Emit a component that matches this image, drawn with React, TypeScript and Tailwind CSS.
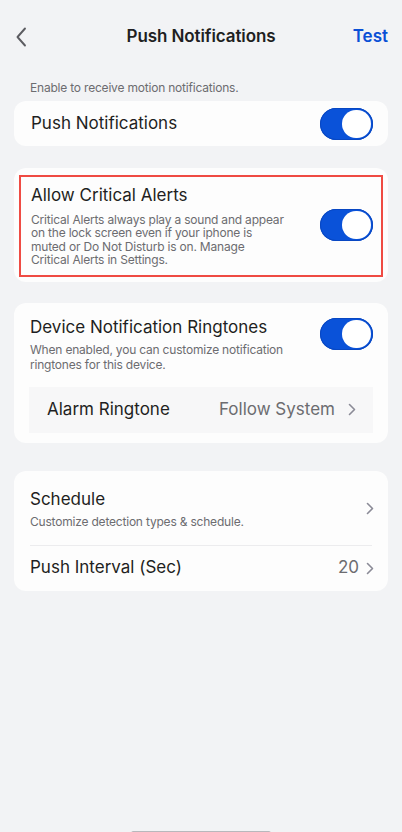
import React from "react";

function Toggle() {
  return (
    <div className="relative h-[32px] w-[53px] shrink-0 rounded-full bg-[#0a52d9] shadow-[inset_0_0_0_1px_#0847c2]">
      <div className="absolute right-[2px] top-[2px] h-[28px] w-[29px] rounded-full bg-white" />
    </div>
  );
}

function Chevron({ className = "" }: { className?: string }) {
  return (
    <svg width="8" height="13" viewBox="0 0 8 13" className={className} fill="none">
      <path d="M1.5 1.5 6.5 6.5 1.5 11.5" stroke="#8b8b97" strokeWidth="1.6" strokeLinecap="round" strokeLinejoin="round" />
    </svg>
  );
}

export default function App() {
  return (
    <div
      className="relative min-h-[832px] w-full overflow-hidden bg-[#f2f3f5] text-[#1f1f22]"
      style={{ fontFamily: "Inter, 'Noto Sans', sans-serif" }}
    >
      {/* top bar */}
      <div className="mt-[18px] grid h-[38px] grid-cols-[1fr_auto_1fr] items-center px-[14px]">
        <svg width="14" height="20" viewBox="0 0 14 20" fill="none" className="ml-[1px]">
          <path d="M10 1.5 2.5 10 10 18.5" stroke="#5c5c61" strokeWidth="1.9" strokeLinecap="round" strokeLinejoin="round" />
        </svg>
        <div className="text-[17px] font-semibold tracking-[-0.1px]">Push Notifications</div>
        <div className="justify-self-end text-[17px] font-semibold text-[#0a50d6]">Test</div>
      </div>

      <div className="mt-[24px] px-[30px] text-[12px] leading-[16px] tracking-[-0.2px] text-[#6c6c70]">
        Enable to receive motion notifications.
      </div>

      {/* push notifications */}
      <div className="mx-[14px] mt-[5px] flex h-[45px] items-center justify-between rounded-[12px] bg-[#fdfdfd] pl-[17px] pr-[15px]">
        <span className="text-[17px]">Push Notifications</span>
        <Toggle />
      </div>

      {/* critical alerts */}
      <div className="mx-[14px] mt-[22px] rounded-[12px] bg-[#fdfdfd] px-[5px] pb-[5px] pt-[7px]">
        <div className="flex items-center justify-between border-2 border-[#ef4b43] pb-[8px] pl-[10px] pr-[8px] pt-[7px]">
          <div className="w-[262px]">
            <div className="text-[17px] leading-[22px]">Allow Critical Alerts</div>
            <div className="mt-[7px] text-[12px] leading-[13.4px] tracking-[-0.2px] text-[#6c6c70]">
              Critical Alerts always play a sound and appear
              <br />
              on the lock screen even if your iphone is
              <br />
              muted or Do Not Disturb is on. Manage
              <br />
              Critical Alerts in Settings.
            </div>
          </div>
          <Toggle />
        </div>
      </div>

      {/* ringtones */}
      <div className="mx-[14px] mt-[21px] rounded-[12px] bg-[#fdfdfd] px-[15px] pb-[10px] pt-[13px]">
        <div className="flex items-start justify-between pl-[1px]">
          <div className="w-[280px]">
            <div className="text-[17px] leading-[22px]">Device Notification Ringtones</div>
            <div className="mt-[4px] text-[12px] leading-[15px] tracking-[-0.2px] text-[#6c6c70]">
              When enabled, you can customize notification ringtones for this device.
            </div>
          </div>
          <div className="mt-[2px]">
            <Toggle />
          </div>
        </div>
        <div className="mt-[15px] flex h-[46px] items-center justify-between bg-[#f7f7f8] pl-[18px] pr-[17px]">
          <span className="text-[17px]">Alarm Ringtone</span>
          <div className="flex items-center gap-[13px]">
            <span className="text-[17px] text-[#6c6c70]">Follow System</span>
            <Chevron />
          </div>
        </div>
      </div>

      {/* schedule */}
      <div className="mx-[14px] mt-[28px] rounded-[12px] bg-[#fdfdfd] pl-[16px] pr-[14px]">
        <div className="flex items-center justify-between pb-[15px] pt-[17px]">
          <div>
            <div className="text-[17px] leading-[22px]">Schedule</div>
            <div className="mt-[4px] text-[12px] leading-[16px] tracking-[-0.2px] text-[#6c6c70]">
              Customize detection types &amp; schedule.
            </div>
          </div>
          <Chevron />
        </div>
        <div className="mr-[2px] h-px bg-[#ececee]" />
        <div className="flex h-[45px] items-center justify-between">
          <span className="text-[17px]">Push Interval (Sec)</span>
          <div className="flex items-center gap-[7px]">
            <span className="text-[17px] text-[#6c6c70]">20</span>
            <Chevron />
          </div>
        </div>
      </div>

      {/* home indicator */}
      <div className="absolute bottom-[-4px] left-1/2 h-[5px] w-[140px] -translate-x-1/2 rounded-full bg-[#b8b8bc]" />
    </div>
  );
}
